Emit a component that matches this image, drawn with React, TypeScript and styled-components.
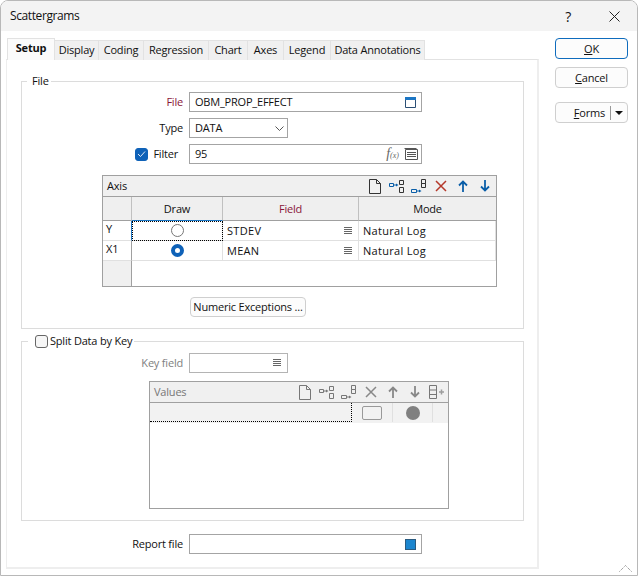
import React from "react";
import styled, { createGlobalStyle } from "styled-components";

const GlobalStyle = createGlobalStyle`
  html, body { margin: 0; padding: 0; background: #fff; }
  body { font-family: "Open Sans", "Noto Sans", sans-serif; font-size: 11px; letter-spacing: -0.2px; color: #111; }
  * { box-sizing: border-box; }
`;

const Window = styled.div`
  position: relative;
  width: 638px;
  height: 576px;
  background: #fff;
  border: 1px solid #b8b8b8;
  border-radius: 8px 8px 0 0;
  overflow: hidden;
`;

const TitleBar = styled.div`
  height: 30px;
  background: #f3f3f3;
  display: flex;
  align-items: center;
  padding: 0 0 0 9px;
  font-size: 12px;
  letter-spacing: -0.4px;
`;

const TitleText = styled.span`
  flex: 1;
  margin-top: -2px;
`;

const TitleButton = styled.span`
  width: 46px;
  height: 30px;
  display: flex;
  align-items: center;
  justify-content: center;
  font-size: 14px;
`;

const Body = styled.div`
  display: flex;
  padding-top: 7px;
`;

const Main = styled.div`
  width: 533px;
  margin-left: 5px;
`;

const Tabs = styled.div`
  position: relative;
  z-index: 1;
  display: flex;
  align-items: flex-end;
  height: 22px;
  margin-bottom: -1px;
  padding-left: 1px;
`;

const Tab = styled.div<{ $active?: boolean; $width: number }>`
  width: ${(p) => p.$width}px;
  height: ${(p) => (p.$active ? 22 : 20)}px;
  display: flex;
  align-items: center;
  justify-content: center;
  padding-bottom: ${(p) => (p.$active ? 4 : 2)}px;
  background: ${(p) => (p.$active ? "#fbfbfb" : "#f0f0f0")};
  border: 1px solid #e2e2e2;
  border-bottom: none;
  border-left-width: ${(p) => (p.$active ? 1 : 0)}px;
  font-weight: ${(p) => (p.$active ? 700 : 400)};
`;

const Pane = styled.div`
  height: 510px;
  padding: 21px 13px 14px 14px;
  border: 2px solid #eeeeee;
  border-width: 1px 2px 2px 1px;
  border-top-color: #e2e2e2;
`;

const Group = styled.div<{ $top: number; $height: number; $after: number }>`
  position: relative;
  height: ${(p) => p.$height}px;
  padding-top: ${(p) => p.$top}px;
  border: 1px solid #dcdcdc;
  margin-bottom: ${(p) => p.$after}px;
`;

const Legend = styled.div<{ $left: number; $inset: number }>`
  position: absolute;
  top: -8px;
  left: ${(p) => p.$left}px;
  height: 15px;
  padding: 0 2px 0 ${(p) => p.$inset}px;
  background: #fff;
  display: flex;
  align-items: center;
  gap: 2px;
`;

const Caption = styled.span`
  margin-bottom: 2px;
`;

const Row = styled.div<{ $gap?: number; $inset?: number }>`
  display: flex;
  align-items: center;
  height: 20px;
  margin-left: ${(p) => p.$inset ?? 0}px;
  margin-bottom: ${(p) => p.$gap ?? 6}px;
`;

const Label = styled.div<{ $color?: string; $inset?: number }>`
  width: 161px;
  margin-right: 6px;
  padding-right: ${(p) => p.$inset ?? 0}px;
  display: flex;
  justify-content: flex-end;
  align-items: center;
  gap: 5px;
  color: ${(p) => p.$color ?? "#111"};
`;

const Field = styled.div<{ $width: number; $end?: number; $disabled?: boolean }>`
  width: ${(p) => p.$width}px;
  height: 20px;
  display: flex;
  align-items: center;
  gap: 5px;
  padding: 0 ${(p) => p.$end ?? 5}px 0 5px;
  background: #fff;
  border: 1px solid ${(p) => (p.$disabled ? "#b4b4b4" : "#a4a4a4")};
`;

const FieldValue = styled.span`
  flex: 1;
  margin-bottom: 2px;
`;

const Check = styled.span<{ $checked?: boolean }>`
  width: 13px;
  height: 13px;
  border-radius: 3px;
  display: inline-flex;
  align-items: center;
  justify-content: center;
  background: ${(p) => (p.$checked ? "#0f62b8" : "#f6f6f6")};
  border: 1px solid ${(p) => (p.$checked ? "#0f62b8" : "#666")};
`;

const GridBox = styled.div<{ $left: number; $width: number; $height: number; $bottom: number }>`
  margin-left: ${(p) => p.$left}px;
  width: ${(p) => p.$width}px;
  height: ${(p) => p.$height}px;
  margin-bottom: ${(p) => p.$bottom}px;
  border: 1px solid #a0a0a0;
  display: flex;
  flex-direction: column;
`;

const GridBar = styled.div<{ $muted?: boolean }>`
  height: 21px;
  flex: none;
  display: flex;
  align-items: center;
  justify-content: space-between;
  padding: 0 0 0 4px;
  background: #f0f0f0;
  border-bottom: 1px solid #a0a0a0;
  color: ${(p) => (p.$muted ? "#777" : "#111")};
`;

const BarIcons = styled.div`
  display: flex;
  align-items: center;
`;

const IconSlot = styled.span`
  width: 22px;
  height: 20px;
  display: flex;
  align-items: center;
  justify-content: center;
`;

const Table = styled.div`
  display: grid;
  grid-template-columns: 29px 91px 136px 1fr;
  grid-template-rows: 24px 20px 20px 1fr;
  flex: 1;
`;

const ColHead = styled.div<{ $color?: string; $accent?: boolean; $last?: boolean }>`
  display: flex;
  align-items: center;
  justify-content: center;
  padding-bottom: 1px;
  background: #efefef;
  color: ${(p) => p.$color ?? "#111"};
  border-bottom: ${(p) => (p.$accent ? "1px solid #1c76c4" : "1px solid #a0a0a0")};
  border-right: ${(p) => (p.$last ? "none" : "1px solid #c0c0c0")};
`;

const RowHead = styled.div<{ $active?: boolean; $empty?: boolean }>`
  padding: 0 0 5px 3px;
  display: flex;
  align-items: center;
  background: ${(p) => (p.$empty ? "#f0f0f0" : "#fff")};
  border-bottom: ${(p) => (p.$empty ? "none" : "1px solid #e0e0e0")};
  border-right: 1px solid ${(p) => (p.$active ? "#1c76c4" : "#a0a0a0")};
`;

const Cell = styled.div<{ $focus?: boolean; $center?: boolean }>`
  display: flex;
  align-items: center;
  justify-content: ${(p) => (p.$center ? "center" : "space-between")};
  padding: ${(p) => (p.$center ? "0 0 0 1px" : "0 6px 0 4px")};
  letter-spacing: 0.3px;
  border-bottom: 1px solid #e0e0e0;
  border-right: 1px solid #e0e0e0;
  outline: ${(p) => (p.$focus ? "1px dotted #000" : "none")};
  outline-offset: -1px;
`;

const Filler = styled.div`
  grid-column: 2 / 5;
  background: #fff;
`;

const Radio = styled.span<{ $on?: boolean }>`
  width: 13px;
  height: 13px;
  border-radius: 50%;
  background: #fff;
  border: ${(p) => (p.$on ? "4px solid #0f62b8" : "1px solid #777")};
`;

const NumericButton = styled.div`
  margin-left: 168px;
  width: 116px;
  height: 20px;
  display: flex;
  align-items: center;
  justify-content: center;
  padding-bottom: 2px;
  background: #fcfcfc;
  border: 1px solid #cfcfcf;
  border-radius: 4px;
`;

const ValuesHead = styled.div`
  height: 20px;
  flex: none;
  display: grid;
  grid-template-columns: 202px 41px 40px 1fr;
  background: #f2f2f2;
  border-bottom: 1px solid #f2f2f2;
`;

const ValuesKey = styled.div`
  border-right: 1px dotted #000;
  border-bottom: 1px dotted #000;
`;

const ValuesCell = styled.div`
  display: flex;
  align-items: center;
  justify-content: center;
  border-right: 1px solid #e0e0e0;
`;

const Swatch = styled.span`
  width: 20px;
  height: 14px;
  background: #f2f2f2;
  border: 1px solid #999;
  border-radius: 2px;
`;

const Disc = styled.span`
  width: 14px;
  height: 14px;
  border-radius: 50%;
  background: #808080;
`;

const ReportSquare = styled.span`
  width: 11px;
  height: 11px;
  background: #1c86cf;
  border: 1px solid #2b5b80;
`;

const Side = styled.div`
  width: 73px;
  margin-left: 16px;
  display: flex;
  flex-direction: column;
`;

const SideButton = styled.div<{ $primary?: boolean; $bottom: number }>`
  height: 21px;
  margin-bottom: ${(p) => p.$bottom}px;
  display: flex;
  align-items: center;
  justify-content: center;
  background: #fcfcfc;
  border: 1px solid ${(p) => (p.$primary ? "#0f6cbd" : "#cfcfcf")};
  border-radius: 4px;
`;

const FormsLabel = styled.span`
  flex: 1;
  text-align: right;
  padding-right: 5px;
`;

const FormsArrow = styled.span`
  width: 17px;
  height: 14px;
  display: flex;
  align-items: center;
  justify-content: center;
  border-left: 1px solid #999;
`;

const Grip = styled.svg`
  position: absolute;
  right: 5px;
  bottom: 3px;
`;

const Mnemonic = styled.span`
  text-decoration: underline;
`;

const FxMark = styled.span`
  font-family: "Liberation Serif", serif;
  font-style: italic;
  font-size: 14px;
  color: #666;
  letter-spacing: 0;
`;

const FxSmall = styled.span`
  font-size: 8px;
`;

type IconProps = { color: string; box?: string };

const DocIcon = ({ color }: IconProps) => (
  <svg width="12" height="15" viewBox="0 0 12 15" fill="none" stroke={color}>
    <path d="M.5.5h7l4 4v10h-11zM7.500.5v4h4" />
  </svg>
);

const InsertIcon = ({ color, box = "#0a5ea8" }: IconProps) => (
  <svg width="16" height="15" viewBox="0 0 16 15" fill="none">
    <path d="M10.500 1.500h4v4h-4zM10.500 8.500h4v5h-4z" stroke={color} />
    <path d="M.5 4.500h4v3h-4z" stroke={box} />
    <path d="M5 6h3" stroke={box} />
    <path d="M7 4.500 9.500 6 7 7.500z" fill={box} />
  </svg>
);

const AppendIcon = ({ color, box = "#0a5ea8" }: IconProps) => (
  <svg width="16" height="15" viewBox="0 0 16 15" fill="none">
    <path d="M10.500.5h4v4h-4zM10.500 4.500h4v4h-4z" stroke={color} />
    <path d="M.5 10.500h5v3h-5z" stroke={box} />
    <path d="M6 12h3" stroke={box} />
    <path d="M8 10.500 10.500 12 8 13.500z" fill={box} />
  </svg>
);

const CrossIcon = ({ color }: IconProps) => (
  <svg width="12" height="12" viewBox="0 0 12 12" fill="none" stroke={color} strokeWidth="1.500">
    <path d="M1 1l10 10M11 1 1 11" />
  </svg>
);

const UpIcon = ({ color }: IconProps) => (
  <svg width="10" height="12" viewBox="0 0 10 12" fill="none" stroke={color} strokeWidth="1.800">
    <path d="M5 12V2M1 5.500 5 1.500l4 4" />
  </svg>
);

const DownIcon = ({ color }: IconProps) => (
  <svg width="10" height="12" viewBox="0 0 10 12" fill="none" stroke={color} strokeWidth="1.800">
    <path d="M5 0v10M1 6.500l4 4 4-4" />
  </svg>
);

const AddColumnIcon = ({ color }: IconProps) => (
  <svg width="16" height="14" viewBox="0 0 16 14" fill="none">
    <path d="M.5.5h7v13h-7zM.5 5h7M.5 9.500h7" stroke={color} />
    <path d="M10 7h5M12.500 4.500v5" stroke={color} strokeWidth="1.500" opacity="0.7" />
  </svg>
);

const ListIcon = () => (
  <svg width="8" height="8" viewBox="0 0 8 8" stroke="#666">
    <path d="M0 .5h8M0 2.500h8M0 4.500h8M0 6.500h8" />
  </svg>
);

const CalendarIcon = () => (
  <svg width="11" height="11" viewBox="0 0 11 11" fill="none">
    <path d="M.5.5h10v10H.5z" stroke="#2b4f75" />
    <path d="M0 0h11v3H0z" fill="#1c76c4" />
  </svg>
);

const TableIcon = () => (
  <svg width="14" height="12" viewBox="0 0 14 12" fill="none" stroke="#555">
    <path d="M1.500 1.500h12v10h-12zM3 4.500h9M3 6.500h9M3 8.500h9" />
    <path d="M.5.500h12" />
  </svg>
);

const CheckMark = () => (
  <svg width="9" height="8" viewBox="0 0 9 8" fill="none" stroke="#dfeaf6" strokeWidth="1">
    <path d="M1 4l2.500 2.500L8 1.500" />
  </svg>
);

const tabs: [string, number][] = [
  ["Display", 44],
  ["Coding", 45],
  ["Regression", 65],
  ["Chart", 39],
  ["Axes", 36],
  ["Legend", 47],
  ["Data Annotations", 94],
];

export default function App() {
  return (
    <Window>
      <GlobalStyle />
      <TitleBar>
        <TitleText>Scattergrams</TitleText>
        <TitleButton>?</TitleButton>
        <TitleButton>
          <svg width="11" height="11" viewBox="0 0 11 11" stroke="#222" fill="none">
            <path d="M.5.5l10 10M10.500.5l-10 10" />
          </svg>
        </TitleButton>
      </TitleBar>
      <Body>
        <Main>
          <Tabs>
            <Tab $active $width={48}>Setup</Tab>
            {tabs.map(([name, width]) => (
              <Tab key={name} $width={width}>{name}</Tab>
            ))}
          </Tabs>
          <Pane>
            <Group $top={10} $height={248} $after={12}>
              <Legend $left={5} $inset={5}><Caption>File</Caption></Legend>
              <Row>
                <Label $color="#8a1538"><Caption>File</Caption></Label>
                <Field $width={233}>
                  <FieldValue>OBM_PROP_EFFECT</FieldValue>
                  <CalendarIcon />
                </Field>
              </Row>
              <Row>
                <Label><Caption>Type</Caption></Label>
                <Field $width={99} $end={3}>
                  <FieldValue>DATA</FieldValue>
                  <svg width="9" height="5" viewBox="0 0 9 5" fill="none" stroke="#555">
                    <path d="M.5.5l4 4 4-4" />
                  </svg>
                </Field>
              </Row>
              <Row $gap={11}>
                <Label $inset={5}>
                  <Check $checked><CheckMark /></Check>
                  <Caption>Filter</Caption>
                </Label>
                <Field $width={233} $end={3}>
                  <FieldValue>95</FieldValue>
                  <FxMark>f<FxSmall>(x)</FxSmall></FxMark>
                  <TableIcon />
                </Field>
              </Row>
              <GridBox $left={80} $width={395} $height={112} $bottom={10}>
                <GridBar>
                  <Caption>Axis</Caption>
                  <BarIcons>
                    <IconSlot><DocIcon color="#333" /></IconSlot>
                    <IconSlot><InsertIcon color="#333" /></IconSlot>
                    <IconSlot><AppendIcon color="#333" /></IconSlot>
                    <IconSlot><CrossIcon color="#b5382a" /></IconSlot>
                    <IconSlot><UpIcon color="#0a5ea8" /></IconSlot>
                    <IconSlot><DownIcon color="#0a5ea8" /></IconSlot>
                  </BarIcons>
                </GridBar>
                <Table>
                  <ColHead />
                  <ColHead $accent>Draw</ColHead>
                  <ColHead $color="#8a1538">Field</ColHead>
                  <ColHead $last>Mode</ColHead>
                  <RowHead $active>Y</RowHead>
                  <Cell $center $focus><Radio /></Cell>
                  <Cell>STDEV<ListIcon /></Cell>
                  <Cell>Natural Log</Cell>
                  <RowHead>X1</RowHead>
                  <Cell $center><Radio $on /></Cell>
                  <Cell>MEAN<ListIcon /></Cell>
                  <Cell>Natural Log</Cell>
                  <RowHead $empty />
                  <Filler />
                </Table>
              </GridBox>
              <NumericButton>Numeric Exceptions ...</NumericButton>
            </Group>
            <Group $top={11} $height={180} $after={13}>
              <Legend $left={6} $inset={7}>
                <Check />
                <Caption>Split Data by Key</Caption>
              </Legend>
              <Row $gap={8}>
                <Label $color="#808080"><Caption>Key field</Caption></Label>
                <Field $width={99} $end={6} $disabled>
                  <FieldValue />
                  <ListIcon />
                </Field>
              </Row>
              <GridBox $left={127} $width={300} $height={128} $bottom={0}>
                <GridBar $muted>
                  <Caption>Values</Caption>
                  <BarIcons>
                    <IconSlot><DocIcon color="#777" /></IconSlot>
                    <IconSlot><InsertIcon color="#777" box="#777" /></IconSlot>
                    <IconSlot><AppendIcon color="#777" box="#777" /></IconSlot>
                    <IconSlot><CrossIcon color="#888" /></IconSlot>
                    <IconSlot><UpIcon color="#888" /></IconSlot>
                    <IconSlot><DownIcon color="#888" /></IconSlot>
                    <IconSlot><AddColumnIcon color="#777" /></IconSlot>
                  </BarIcons>
                </GridBar>
                <ValuesHead>
                  <ValuesKey />
                  <ValuesCell><Swatch /></ValuesCell>
                  <ValuesCell><Disc /></ValuesCell>
                </ValuesHead>
              </GridBox>
            </Group>
            <Row $gap={0} $inset={1}>
              <Label><Caption>Report file</Caption></Label>
              <Field $width={233}>
                <FieldValue />
                <ReportSquare />
              </Field>
            </Row>
          </Pane>
        </Main>
        <Side>
          <SideButton $primary $bottom={8}><span><Mnemonic>O</Mnemonic>K</span></SideButton>
          <SideButton $bottom={14}><span><Mnemonic>C</Mnemonic>ancel</span></SideButton>
          <SideButton $bottom={0}>
            <FormsLabel><Mnemonic>F</Mnemonic>orms</FormsLabel>
            <FormsArrow>
              <svg width="8" height="4" viewBox="0 0 8 4"><path d="M0 0h8L4 4z" fill="#111" /></svg>
            </FormsArrow>
          </SideButton>
        </Side>
      </Body>
      <Grip width="13" height="7" viewBox="0 0 13 7" fill="none" stroke="#777">
        <path d="M.5 6.500 6.500.5l6 6" strokeDasharray="1 1" />
      </Grip>
    </Window>
  );
}
